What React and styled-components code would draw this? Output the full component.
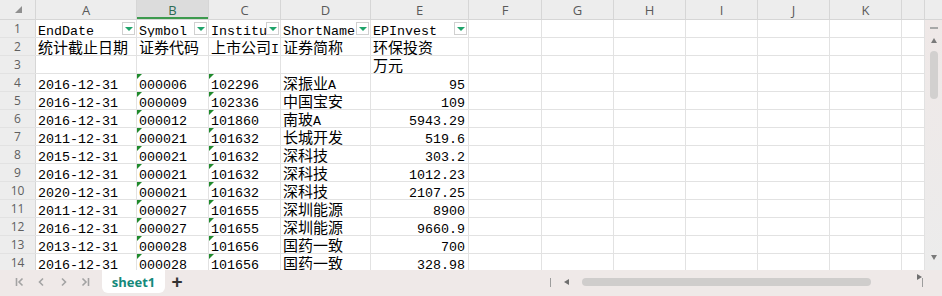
import React from 'react';
import styled, { createGlobalStyle, css } from 'styled-components';

const GlobalStyle = createGlobalStyle`
  html, body {
    margin: 0;
    padding: 0;
    background: #ffffff;
  }
`;

const COLUMNS = [
  { key: 'A', width: 101 },
  { key: 'B', width: 72, active: true },
  { key: 'C', width: 72 },
  { key: 'D', width: 90 },
  { key: 'E', width: 98 },
  { key: 'F', width: 73 },
  { key: 'G', width: 72 },
  { key: 'H', width: 72 },
  { key: 'I', width: 72 },
  { key: 'J', width: 72 },
  { key: 'K', width: 72 },
  { key: '', width: 23 },
];

const HEAD = ['EndDate', 'Symbol', 'InstitutionID', 'ShortName', 'EPInvest'];

const ROWS = [
  ['统计截止日期', '证券代码', '上市公司ID', '证券简称', '环保投资'],
  ['', '', '', '', '万元'],
  ['2016-12-31', '000006', '102296', '深振业A', '95'],
  ['2016-12-31', '000009', '102336', '中国宝安', '109'],
  ['2016-12-31', '000012', '101860', '南玻A', '5943.29'],
  ['2011-12-31', '000021', '101632', '长城开发', '519.6'],
  ['2015-12-31', '000021', '101632', '深科技', '303.2'],
  ['2016-12-31', '000021', '101632', '深科技', '1012.23'],
  ['2020-12-31', '000021', '101632', '深科技', '2107.25'],
  ['2011-12-31', '000027', '101655', '深圳能源', '8900'],
  ['2016-12-31', '000027', '101655', '深圳能源', '9660.9'],
  ['2013-12-31', '000028', '101656', '国药一致', '700'],
  ['2016-12-31', '000028', '101656', '国药一致', '328.98'],
];

const Page = styled.div`
  width: 942px;
  height: 296px;
  display: flex;
  flex-direction: column;
  overflow: hidden;
  font-family: "Liberation Mono", "Noto Sans CJK SC", monospace;
`;

const HeaderRow = styled.div`
  display: flex;
  height: 20px;
  flex-shrink: 0;
  background: #ededed;
  border-bottom: 1px solid #d6d6d6;
  box-sizing: border-box;
`;

const Corner = styled.div`
  width: 36px;
  flex-shrink: 0;
  border-right: 1px solid #d6d6d6;
  box-sizing: border-box;
  display: flex;
  align-items: center;
  justify-content: center;
  &::after {
    content: '';
    width: 0;
    height: 0;
    border-left: 7px solid transparent;
    border-bottom: 7px solid #8f8f8f;
    margin-left: 2px;
    margin-bottom: 1px;
  }
`;

const ColHead = styled.div`
  width: ${(p) => p.$w}px;
  flex-shrink: 0;
  box-sizing: border-box;
  border-right: 1px solid #d6d6d6;
  display: flex;
  align-items: center;
  justify-content: center;
  font-family: "Open Sans", "Noto Sans", sans-serif;
  font-size: 13px;
  color: #5a5a5a;
  ${(p) =>
    p.$active &&
    css`
      background: #dcdcdc;
      color: #2d6b55;
      box-shadow: inset 0 -2px 0 #3d9a4e;
    `}
`;

const HeadFiller = styled.div`
  flex: 1;
`;

const Body = styled.div`
  flex: 1;
  display: flex;
  min-height: 0;
`;

const Rows = styled.div`
  width: 925px;
  overflow: hidden;
`;

const Row = styled.div`
  display: flex;
  height: 18px;
  box-sizing: border-box;
  border-bottom: 1px solid #e2e2e2;
`;

const RowNum = styled.div`
  width: 36px;
  flex-shrink: 0;
  box-sizing: border-box;
  background: #ededed;
  border-right: 1px solid #d6d6d6;
  display: flex;
  align-items: center;
  justify-content: center;
  font-family: "Open Sans", "Noto Sans", sans-serif;
  font-size: 12px;
  color: #5f5f5f;
`;

const Cell = styled.div`
  position: relative;
  width: ${(p) => p.$w}px;
  flex-shrink: 0;
  box-sizing: border-box;
  border-right: 1px solid #e2e2e2;
  display: flex;
  align-items: flex-start;
  padding: 5px ${(p) => (p.$right ? 3 : 1)}px 0 2px;
  font-size: 13.33px;
  line-height: 14px;
  color: #000;
  white-space: nowrap;
  overflow: hidden;
`;

const CellText = styled.span`
  flex: 1;
  min-width: 0;
  overflow-x: clip;
  overflow-y: visible;
  text-align: ${(p) => (p.$right ? 'right' : 'left')};
`;

const Cjk = styled.span`
  font-family: "Noto Sans CJK SC", sans-serif;
  font-size: 15px;
  line-height: 0;
`;

const FilterBtn = styled.span`
  flex-shrink: 0;
  width: 13px;
  height: 13px;
  margin-top: -3px;
  box-sizing: border-box;
  border: 1px solid #d0d0d0;
  background: #ffffff;
  display: flex;
  align-items: center;
  justify-content: center;
  &::after {
    content: '';
    border-left: 4px solid transparent;
    border-right: 4px solid transparent;
    border-top: 4px solid #1fa36a;
  }
`;

const TextFlag = styled.span`
  position: absolute;
  left: 0;
  top: 0;
  border-top: 5px solid #1f8a2c;
  border-right: 5px solid transparent;
`;

const VScroll = styled.div`
  width: 17px;
  flex-shrink: 0;
  background: linear-gradient(#efe8e7, #ececec);
  display: flex;
  flex-direction: column;
  align-items: center;
  padding: 7px 0 10px;
  box-sizing: border-box;
`;

const Dash = styled.span`
  width: 8px;
  height: 2px;
  background: #a8a8a8;
  margin-bottom: 9px;
`;

const Arrow = styled.span`
  width: 0;
  height: 0;
  border-left: 3px solid transparent;
  border-right: 3px solid transparent;
  ${(p) =>
    p.$down
      ? css`border-top: 5px solid #7a7a7a;`
      : css`border-bottom: 5px solid #7a7a7a;`}
`;

const VThumb = styled.span`
  width: 8px;
  height: 48px;
  margin-top: 8px;
  border-radius: 4px;
  background: #d2d0cf;
`;

const Spacer = styled.span`
  flex: 1;
`;

const TabBar = styled.div`
  height: 26px;
  flex-shrink: 0;
  background: #efe9e8;
  display: flex;
  align-items: flex-start;
`;

const Nav = styled.div`
  display: flex;
  align-items: center;
  gap: 13px;
  height: 24px;
  padding-left: 15px;
  width: 102px;
  box-sizing: border-box;
`;

const NavIcon = styled.svg`
  width: 9px;
  height: 10px;
  stroke: #a3a3a3;
  stroke-width: 1.6;
  fill: none;
`;

const SheetTab = styled.div`
  width: 63px;
  height: 23px;
  background: #ffffff;
  border-radius: 0 0 6px 6px;
  display: flex;
  align-items: center;
  justify-content: center;
  font-family: "Open Sans", "Noto Sans", sans-serif;
  font-weight: 700;
  font-size: 13px;
  color: #14897a;
`;

const AddTab = styled.div`
  width: 24px;
  height: 24px;
  display: flex;
  align-items: center;
  justify-content: center;
  font-family: "Liberation Sans", sans-serif;
  font-size: 19px;
  font-weight: 700;
  color: #333;
`;

const HScroll = styled.div`
  margin-left: auto;
  width: 394px;
  height: 24px;
  display: flex;
  align-items: center;
  box-sizing: border-box;
  padding: 0 19px 0 2px;
`;

const Bar = styled.span`
  width: 1px;
  height: 9px;
  background: #9d9d9d;
`;

const SideArrow = styled.span`
  width: 0;
  height: 0;
  border-top: 3px solid transparent;
  border-bottom: 3px solid transparent;
  margin: 0 ${(p) => p.$m};
  ${(p) =>
    p.$right
      ? css`border-left: 5px solid #6f6f6f;`
      : css`border-right: 5px solid #6f6f6f;`}
`;

const HThumb = styled.span`
  flex: 1;
  height: 8px;
  border-radius: 4px;
  background: #cfcdcc;
  margin-right: 46px;
`;

const renderText = (text) =>
  text.split(/([\u4e00-\u9fff]+)/).map((part, i) =>
    /[\u4e00-\u9fff]/.test(part) ? <Cjk key={i}>{part}</Cjk> : part
  );

const NavButtons = () => (
  <Nav>
    <NavIcon viewBox="0 0 9 10">
      <path d="M1.5 1v8M7.5 1.5L4 5l3.5 3.5" />
    </NavIcon>
    <NavIcon viewBox="0 0 9 10">
      <path d="M6 1.5L2.5 5 6 8.5" />
    </NavIcon>
    <NavIcon viewBox="0 0 9 10">
      <path d="M3 1.5L6.5 5 3 8.5" />
    </NavIcon>
    <NavIcon viewBox="0 0 9 10">
      <path d="M1.5 1.5L5 5 1.5 8.5M7.5 1v8" />
    </NavIcon>
  </Nav>
);

const DataRow = ({ num, values, filter }) => (
  <Row>
    <RowNum>{num}</RowNum>
    {COLUMNS.map((col, i) => {
      const value = values[i] || '';
      const right = !filter && i === 4 && /^[\d.]+$/.test(value);
      const flagged = !filter && (i === 1 || i === 2) && /^\d+$/.test(value);
      return (
        <Cell key={i} $w={col.width} $right={right}>
          {flagged && <TextFlag />}
          <CellText $right={right}>{renderText(value)}</CellText>
          {filter && i < 5 && <FilterBtn />}
        </Cell>
      );
    })}
  </Row>
);

export default function App() {
  return (
    <Page>
      <GlobalStyle />
      <HeaderRow>
        <Corner />
        {COLUMNS.map((col, i) => (
          <ColHead key={i} $w={col.width} $active={col.active}>
            {col.key}
          </ColHead>
        ))}
        <HeadFiller />
      </HeaderRow>
      <Body>
        <Rows>
          <DataRow num={1} values={HEAD} filter />
          {ROWS.map((values, i) => (
            <DataRow key={i} num={i + 2} values={values} />
          ))}
        </Rows>
        <VScroll>
          <Dash />
          <Arrow />
          <VThumb />
          <Spacer />
          <Arrow $down />
        </VScroll>
      </Body>
      <TabBar>
        <NavButtons />
        <SheetTab>sheet1</SheetTab>
        <AddTab>+</AddTab>
        <HScroll>
          <Bar />
          <SideArrow $m="13px" />
          <HThumb />
          <SideArrow $right $m="0 11px" />
          <Bar />
        </HScroll>
      </TabBar>
    </Page>
  );
}
